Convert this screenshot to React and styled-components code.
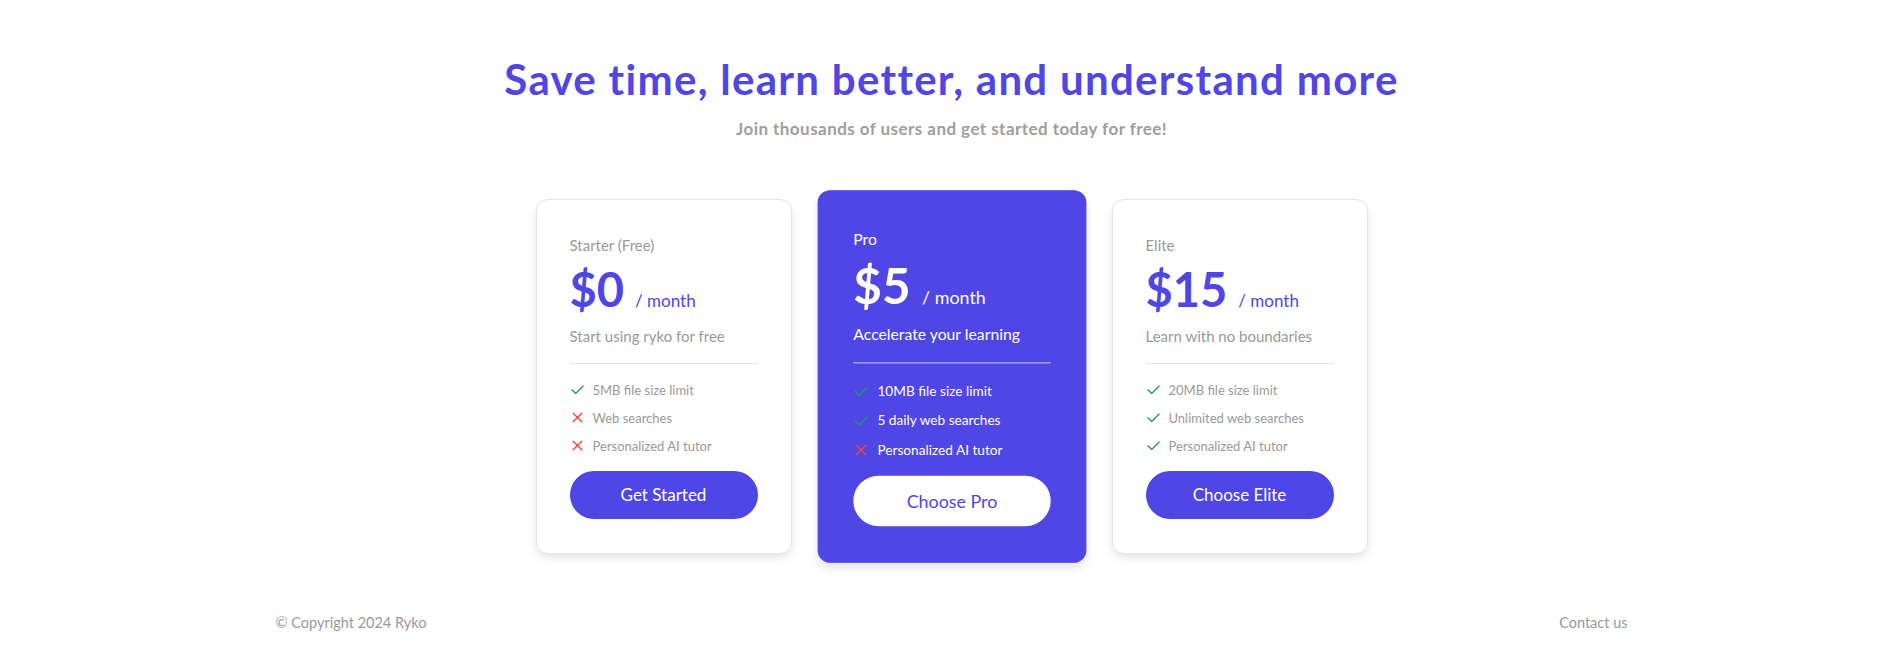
import React from 'react';
import styled, { createGlobalStyle } from 'styled-components';

const GlobalStyle = createGlobalStyle`
  * {
    box-sizing: border-box;
  }
  body {
    margin: 0;
    background: #ffffff;
    font-family: 'Lato', 'Noto Sans', sans-serif;
  }
`;

const Page = styled.div`
  display: flex;
  flex-direction: column;
  align-items: center;
  padding-top: 54px;
  min-height: 652px;
`;

const Title = styled.h1`
  margin: 0;
  font-size: 42px;
  line-height: 1.2;
  font-weight: 700;
  letter-spacing: 1.3px;
  color: #4f46e5;
`;

const Subtitle = styled.p`
  margin: 15px 0 0;
  font-size: 17px;
  line-height: 1.2;
  font-weight: 700;
  letter-spacing: 0.45px;
  color: #9e9e9e;
`;

const Cards = styled.div`
  display: flex;
  align-items: center;
  gap: 32px;
  margin-top: 59px;
`;

const Card = styled.div`
  width: 256px;
  padding: 35px 33px 34px;
  border-radius: 12px;
  border: 1px solid ${(p) => (p.featured ? '#4f46e5' : '#e6e6e6')};
  background: ${(p) => (p.featured ? '#4f46e5' : '#ffffff')};
  box-shadow: 0 4px 8px rgba(0, 0, 0, 0.1);
  transform: ${(p) => (p.featured ? 'scale(1.05)' : 'none')};
`;

const PlanName = styled.div`
  font-size: 15px;
  line-height: 20px;
  color: ${(p) => (p.featured ? '#ffffff' : '#9a9a9a')};
`;

const PriceRow = styled.div`
  display: flex;
  align-items: baseline;
  gap: 11px;
  margin-top: 11px;
`;

const Price = styled.span`
  font-size: 47px;
  line-height: 1;
  font-weight: 700;
  color: ${(p) => (p.featured ? '#ffffff' : '#4f46e5')};
`;

const Per = styled.span`
  font-size: 17px;
  color: ${(p) => (p.featured ? '#ffffff' : '#4f46e5')};
`;

const Description = styled.div`
  margin-top: 13px;
  font-size: 15px;
  line-height: 20px;
  color: ${(p) => (p.featured ? '#ffffff' : '#9a9a9a')};
`;

const Divider = styled.hr`
  margin: 17px 0 0;
  border: none;
  height: 1px;
  background: ${(p) => (p.featured ? 'rgba(255, 255, 255, 0.7)' : '#e5e5e5')};
`;

const Features = styled.ul`
  list-style: none;
  margin: 16px 0 0;
  padding: 0;
  display: flex;
  flex-direction: column;
  gap: 8px;
`;

const Feature = styled.li`
  display: flex;
  align-items: center;
  gap: 8px;
  font-size: 13px;
  line-height: 20px;
  color: ${(p) => (p.featured ? '#ffffff' : '#9a9a9a')};
`;

const IconBox = styled.span`
  display: flex;
  align-items: center;
  justify-content: center;
  width: 15px;
  height: 15px;
`;

const ActionButton = styled.button`
  display: block;
  width: 100%;
  height: 48px;
  margin-top: 15px;
  border: none;
  border-radius: 999px;
  font-family: inherit;
  font-size: 17px;
  cursor: pointer;
  background: ${(p) => (p.featured ? '#ffffff' : '#4f46e5')};
  color: ${(p) => (p.featured ? '#4f46e5' : '#ffffff')};
`;

const Footer = styled.footer`
  display: flex;
  justify-content: space-between;
  width: 100%;
  max-width: 1352px;
  margin-top: 59px;
  font-size: 14.5px;
  line-height: 20px;
  color: #9a9a9a;
`;

const CheckIcon = () => (
  <svg width="15" height="15" viewBox="0 0 24 24" fill="none" stroke="#16a34a" strokeWidth="2" strokeLinecap="round" strokeLinejoin="round">
    <path d="M3 12.5l6 6L21 6.5" />
  </svg>
);

const CrossIcon = () => (
  <svg width="13" height="13" viewBox="0 0 24 24" fill="none" stroke="#ef4444" strokeWidth="2.6" strokeLinecap="round">
    <path d="M4 4l16 16M20 4L4 20" />
  </svg>
);

const plans = [
  {
    name: 'Starter (Free)',
    price: '$0',
    desc: 'Start using ryko for free',
    features: [
      ['5MB file size limit', true],
      ['Web searches', false],
      ['Personalized AI tutor', false],
    ],
    cta: 'Get Started',
  },
  {
    name: 'Pro',
    price: '$5',
    desc: 'Accelerate your learning',
    features: [
      ['10MB file size limit', true],
      ['5 daily web searches', true],
      ['Personalized AI tutor', false],
    ],
    cta: 'Choose Pro',
    featured: true,
  },
  {
    name: 'Elite',
    price: '$15',
    desc: 'Learn with no boundaries',
    features: [
      ['20MB file size limit', true],
      ['Unlimited web searches', true],
      ['Personalized AI tutor', true],
    ],
    cta: 'Choose Elite',
  },
];

const App = () => (
  <>
    <GlobalStyle />
    <Page>
      <Title>Save time, learn better, and understand more</Title>
      <Subtitle>Join thousands of users and get started today for free!</Subtitle>
      <Cards>
        {plans.map((plan) => (
          <Card key={plan.name} featured={plan.featured}>
            <PlanName featured={plan.featured}>{plan.name}</PlanName>
            <PriceRow>
              <Price featured={plan.featured}>{plan.price}</Price>
              <Per featured={plan.featured}>/ month</Per>
            </PriceRow>
            <Description featured={plan.featured}>{plan.desc}</Description>
            <Divider featured={plan.featured} />
            <Features>
              {plan.features.map(([label, ok]) => (
                <Feature key={label} featured={plan.featured}>
                  <IconBox>{ok ? <CheckIcon /> : <CrossIcon />}</IconBox>
                  {label}
                </Feature>
              ))}
            </Features>
            <ActionButton featured={plan.featured}>{plan.cta}</ActionButton>
          </Card>
        ))}
      </Cards>
      <Footer>
        <span>© Copyright 2024 Ryko</span>
        <span>Contact us</span>
      </Footer>
    </Page>
  </>
);

export default App;
